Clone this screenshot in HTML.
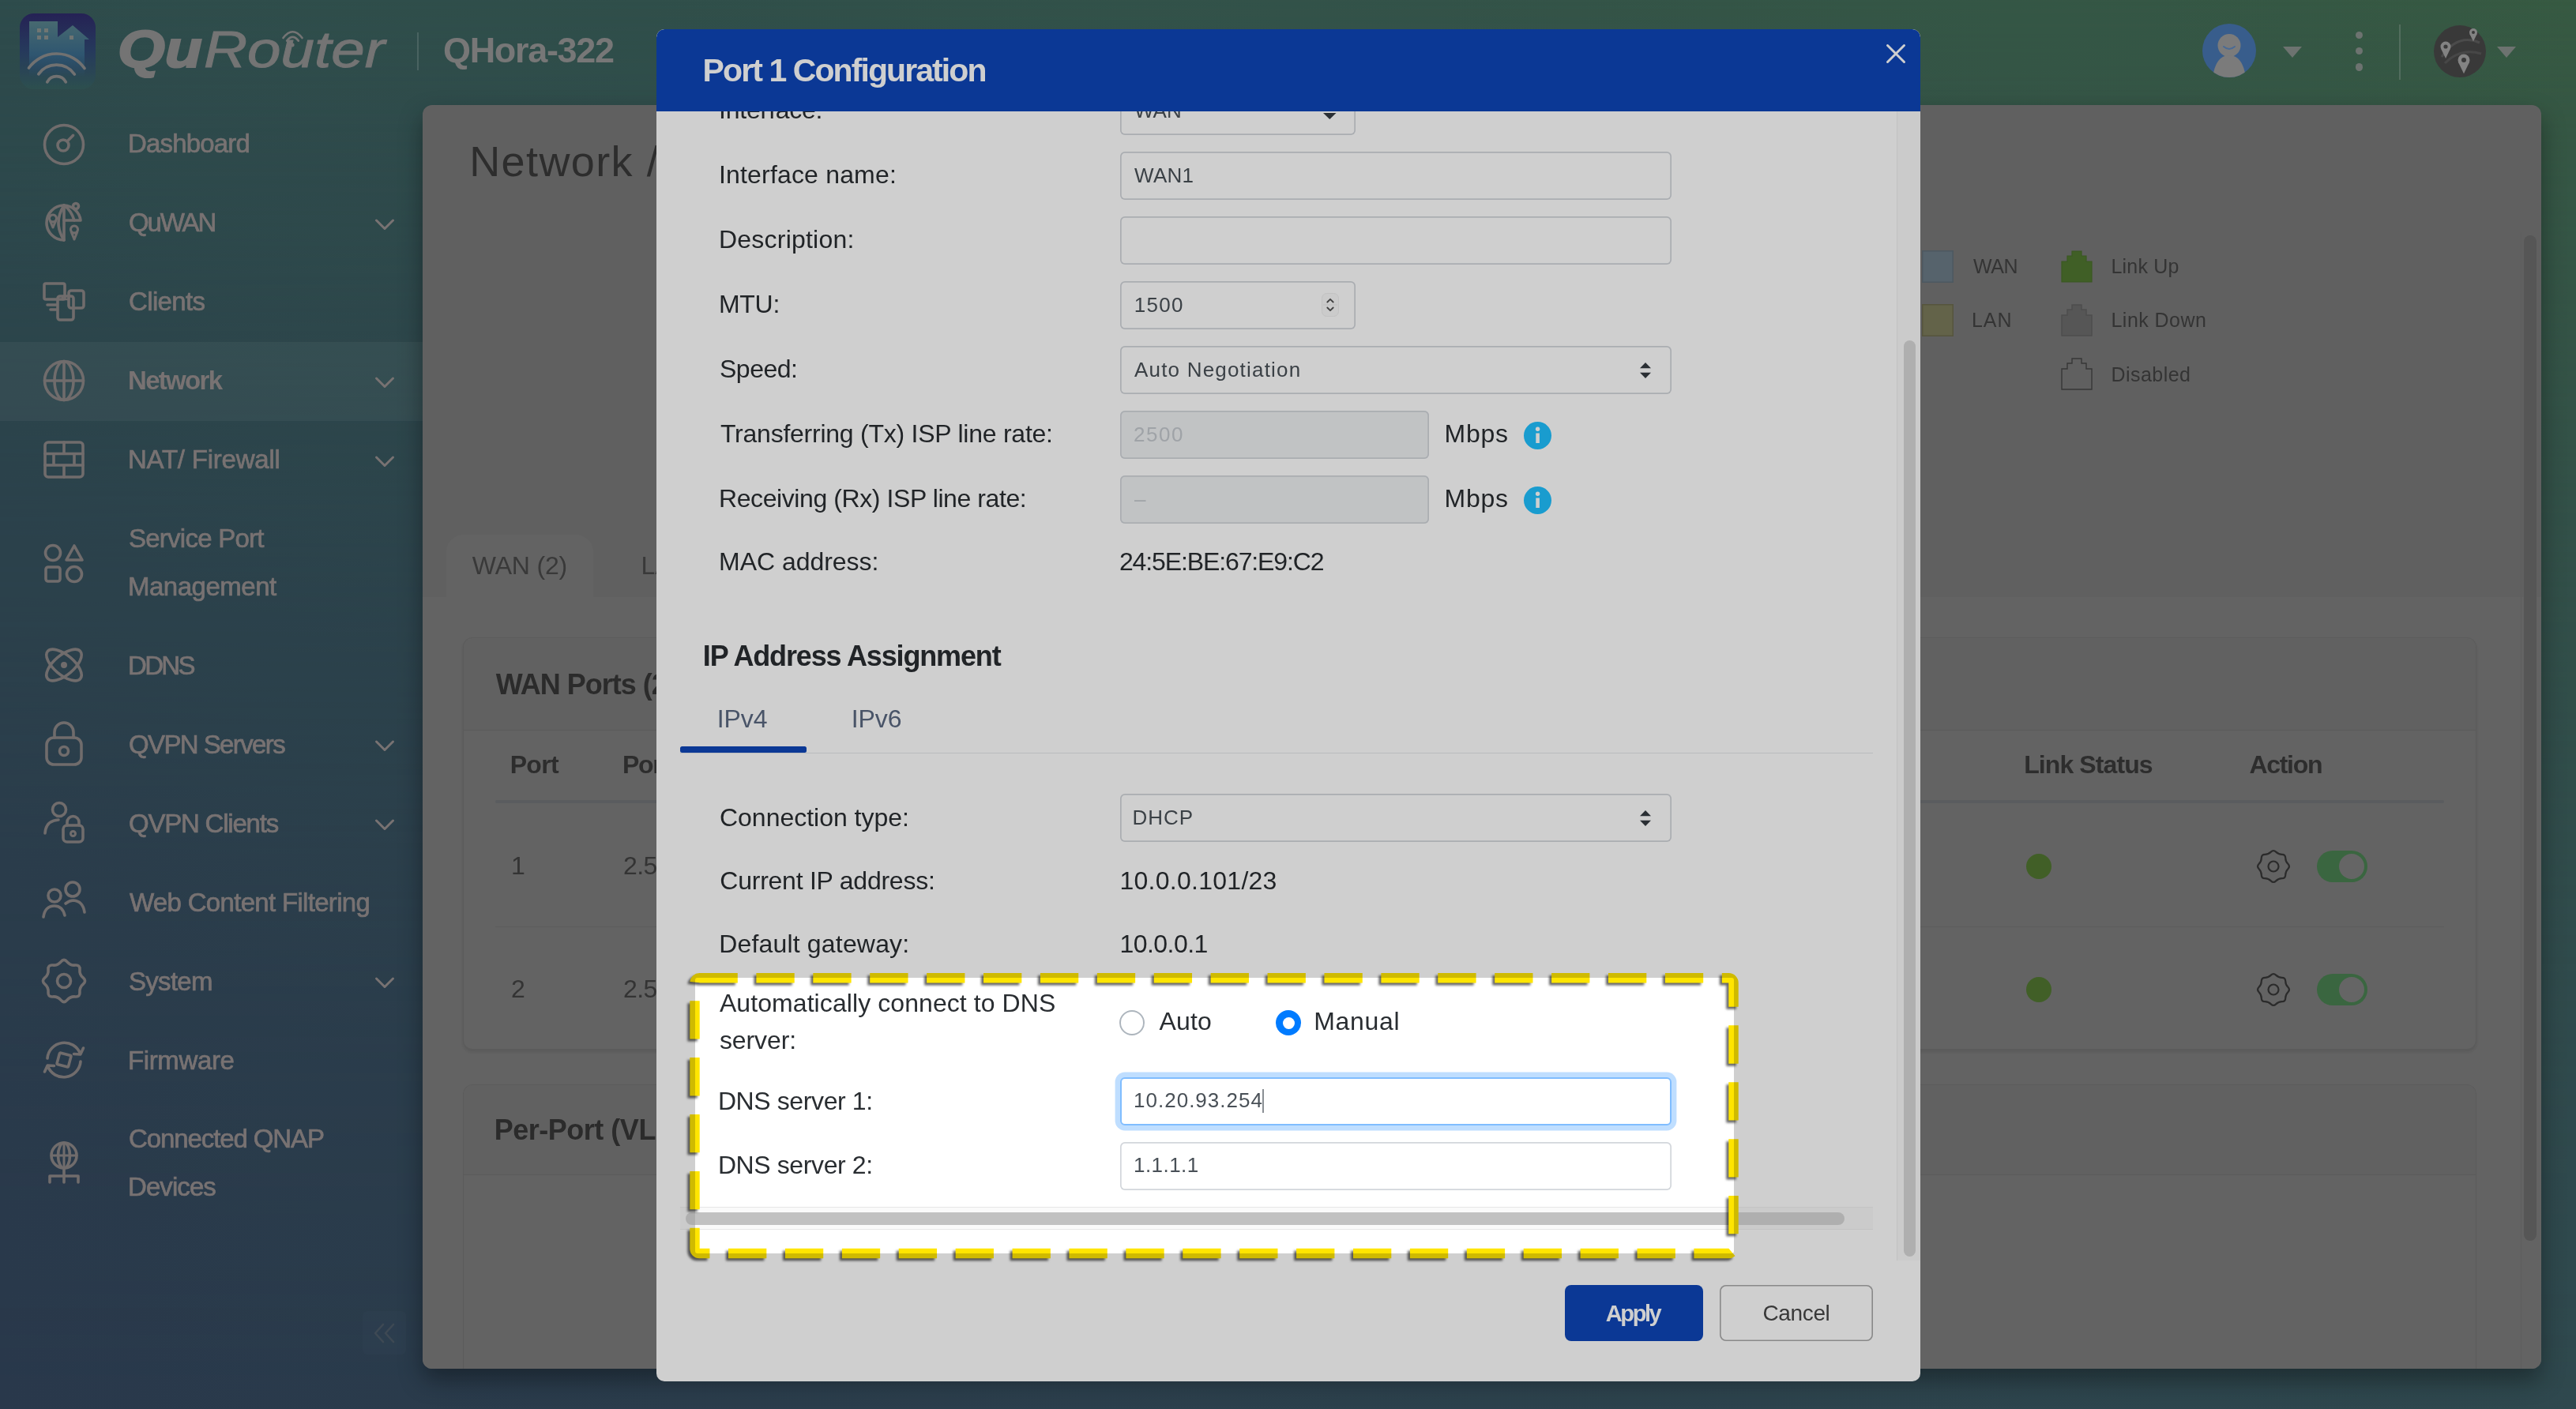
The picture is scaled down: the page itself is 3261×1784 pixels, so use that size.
<!DOCTYPE html>
<html lang="en"><head><meta charset="utf-8"><title>Port 1 Configuration</title><style>
html,body{margin:0;padding:0}
body{width:3261px;height:1784px;position:relative;overflow:hidden;background:#33465d;font-family:'Liberation Sans',sans-serif}
.t{position:absolute;white-space:pre;line-height:1;font-family:'Liberation Sans',sans-serif}
#bg{position:absolute;left:0;top:0;width:3261px;height:1784px;background:linear-gradient(to right,#395e5e 0%,#3f665b 50%,#446f52 100%)}
#bg2{position:absolute;left:0;top:0;width:3261px;height:1784px;background:linear-gradient(to right,#33465d,#3a5960);-webkit-mask-image:linear-gradient(to bottom,rgba(0,0,0,0) 0%,rgba(0,0,0,.17) 11%,rgba(0,0,0,.37) 25%,rgba(0,0,0,.55) 39%,rgba(0,0,0,.67) 50%,rgba(0,0,0,.79) 62%,rgba(0,0,0,.91) 78%,rgba(0,0,0,1) 100%);mask-image:linear-gradient(to bottom,rgba(0,0,0,0) 0%,rgba(0,0,0,.17) 11%,rgba(0,0,0,.37) 25%,rgba(0,0,0,.55) 39%,rgba(0,0,0,.67) 50%,rgba(0,0,0,.79) 62%,rgba(0,0,0,.91) 78%,rgba(0,0,0,1) 100%)}
#panel{position:absolute;left:535px;top:133px;width:2682px;height:1600px;border-radius:12px;background:#777777;overflow:hidden;box-shadow:0 14px 30px rgba(0,0,0,.36)}
#modal{position:absolute;left:830.5px;top:37px;width:1600.5px;height:1712px;border-radius:10px;background:#fff;overflow:hidden}
svg{overflow:visible}
#root{position:absolute;left:0;top:0;width:3261px;height:1784px;will-change:transform}
</style></head><body><div id="root"><div id="bg"></div><div id="bg2"></div><svg style="position:absolute;left:25.00px;top:17.00px;" width="96" height="96" viewBox="0 0 96 96">
<defs>
<linearGradient id="lg1" x1="0" y1="0" x2="0" y2="1"><stop offset="0" stop-color="#2e2a69"/><stop offset="0.5" stop-color="#2f4872"/><stop offset="1" stop-color="#386261"/></linearGradient>
<linearGradient id="lg2" x1="0" y1="0" x2="0" y2="1"><stop offset="0" stop-color="#58828a"/><stop offset="0.6" stop-color="#3a6a8a"/><stop offset="1" stop-color="#38698a" stop-opacity="0"/></linearGradient>
</defs>
<rect x="0" y="0" width="96" height="96" rx="18" fill="url(#lg1)"/>
<path d="M12 10 H48 V30 L67 15 L88 33 H82 V80 H12 Z" fill="url(#lg2)"/>
<g fill="#9a9890" opacity=".8"><rect x="22" y="19" width="5" height="5"/><rect x="31" y="19" width="5" height="5"/><rect x="22" y="28" width="5" height="5"/><rect x="31" y="28" width="5" height="5"/><rect x="63" y="28" width="5" height="5"/></g>
<g fill="none" stroke="#8c8c8c" stroke-width="3.7" stroke-linecap="round">
<path d="M11.5 69 A43.2 43.2 0 0 1 82 69.5"/><path d="M23.8 76.8 A28 28 0 0 1 69.3 77"/><path d="M34.8 86.8 A13.2 13.2 0 0 1 58.3 86.8"/></g>
</svg><span class="t" style="left:149.00px;top:29.33px;font-size:66px;color:#8f8f8f;font-style:italic"><span style="display:inline-block;line-height:1;font-weight:700;transform:scaleX(1.1660);transform-origin:0 0;-webkit-text-stroke:2.2px #8f8f8f">Qu</span><span style="display:inline-block;line-height:1;position:relative;left:17.00px;font-size:65px;transform:scaleX(1.1742);transform-origin:0 0;-webkit-text-stroke:1px #8f8f8f">Router</span></span><svg style="position:absolute;left:357.00px;top:37.00px;" width="27" height="23" viewBox="0 0 27 23"><g fill="none" stroke="#8f8f8f" stroke-width="2.7" stroke-linecap="round"><path d="M1.5 11 Q13.5 -4.5 25.5 11"/><path d="M6.2 14.6 Q13.5 5 20.8 14.6"/></g><circle cx="13.3" cy="20" r="2.4" fill="#8f8f8f"/></svg><div style="position:absolute;left:528.30px;top:41.00px;width:1.60px;height:48.00px;background:rgba(255,255,255,.17)"></div><span class="t" style="left:561.00px;top:40.81px;font-size:45px;color:#939393;letter-spacing:-1.321px;font-weight:700;">QHora-322</span><svg style="position:absolute;left:2788.00px;top:30.00px;" width="68" height="68" viewBox="0 0 68 68">
<defs><clipPath id="avc"><circle cx="34" cy="34" r="34"/></clipPath></defs>
<circle cx="34" cy="34" r="34" fill="#4573ad"/>
<g clip-path="url(#avc)" fill="#989898"><circle cx="34" cy="27.5" r="14.5"/><path d="M13 68 Q17 40 34 40 Q51 40 55 68 Z"/></g>
<path d="M27 29 Q34 35 41 29" fill="none" stroke="#5b83b8" stroke-width="2" stroke-linecap="round"/>
</svg><svg style="position:absolute;left:2889.50px;top:58.50px;" width="24" height="14" viewBox="0 0 24 14"><path d="M0 0 H24 L12 14 Z" fill="#878e8a"/></svg><div style="position:absolute;left:2982.10px;top:40.10px;width:9.20px;height:9.20px;border-radius:50%;background:#878e8a"></div><div style="position:absolute;left:2982.10px;top:60.20px;width:9.20px;height:9.20px;border-radius:50%;background:#878e8a"></div><div style="position:absolute;left:2982.10px;top:80.40px;width:9.20px;height:9.20px;border-radius:50%;background:#878e8a"></div><div style="position:absolute;left:3037.00px;top:30.50px;width:1.60px;height:70.50px;background:rgba(255,255,255,.19)"></div><svg style="position:absolute;left:3080.50px;top:32.00px;" width="66" height="66" viewBox="0 0 66 66">
<circle cx="33" cy="33" r="33" fill="#474747"/>
<path d="M10 40 Q30 10 58 22" fill="none" stroke="#5d5d5d" stroke-width="3"/>
<path d="M14 48 Q34 28 60 36" fill="none" stroke="#585858" stroke-width="3"/>
<g fill="#a2a2a2"><circle cx="15" cy="27" r="6.5"/><path d="M9.02 29.60 L15.00 41.95 L20.98 29.60 Z"/><circle cx="38" cy="44" r="7.5"/><path d="M31.10 47.00 L38.00 61.25 L44.90 47.00 Z"/><circle cx="50" cy="9" r="5"/><path d="M45.40 11.00 L50.00 20.50 L54.60 11.00 Z"/></g>
<g fill="#474747"><circle cx="15" cy="27" r="2.6"/><circle cx="38" cy="44" r="3"/><circle cx="50" cy="9" r="2"/></g>
</svg><svg style="position:absolute;left:3161.30px;top:58.50px;" width="24" height="14" viewBox="0 0 24 14"><path d="M0 0 H24 L12 14 Z" fill="#878e8a"/></svg><div style="position:absolute;left:0.00px;top:432.50px;width:535.00px;height:100.00px;background:rgba(255,255,255,.055)"></div><span class="t" style="left:162.00px;top:165.37px;font-size:33px;color:#948d8d;letter-spacing:-0.823px;-webkit-text-stroke:0.7px #948d8d;">Dashboard</span><svg style="position:absolute;left:54.00px;top:155.50px;" width="54" height="54" viewBox="0 0 54 54"><g fill="none" stroke="#8b8585" stroke-width="3.6" stroke-linecap="round" stroke-linejoin="round"><circle cx="27" cy="27" r="24.5"/><circle cx="26" cy="28" r="7"/><path d="M31 23 L38.5 15.5"/></g></svg><span class="t" style="left:163.00px;top:265.37px;font-size:33px;color:#948d8d;letter-spacing:-2.114px;-webkit-text-stroke:0.7px #948d8d;">QuWAN</span><svg style="position:absolute;left:474.00px;top:276.00px;" width="26" height="18" viewBox="0 0 26 18"><path d="M2.5 3 L13 13.5 L23.5 3" fill="none" stroke="#948d8d" stroke-width="3" stroke-linecap="round" stroke-linejoin="round"/></svg><svg style="position:absolute;left:54.00px;top:255.00px;" width="54" height="54" viewBox="0 0 54 54"><g fill="none" stroke="#8b8585" stroke-width="3.6" stroke-linecap="round" stroke-linejoin="round"><path d="M27 5 A22 22 0 1 0 27 49 Z"/><path d="M27 5 Q13 27 27 49"/><path d="M27 5 Q36 11 40 24"/><path d="M27 5 A22 22 0 0 1 48 24 H27"/><circle cx="42" cy="6" r="3.5"/><path d="M13 26 a4.5 4.5 0 1 1 0.01 0 M13 33 L9.5 25 M13 33 L16.5 25" stroke-width="3"/><path d="M40 40 a4.5 4.5 0 1 1 0.01 0 M40 48 L36.3 39 M40 48 L43.7 39" stroke-width="3"/></g></svg><span class="t" style="left:163.00px;top:365.37px;font-size:33px;color:#948d8d;letter-spacing:-0.628px;-webkit-text-stroke:0.7px #948d8d;">Clients</span><svg style="position:absolute;left:54.00px;top:354.00px;" width="54" height="54" viewBox="0 0 54 54"><g fill="none" stroke="#8b8585" stroke-width="3.6" stroke-linecap="round" stroke-linejoin="round"><rect x="2" y="5" width="26" height="20" rx="2"/><path d="M6 32 H17 M10 38 H17"/><rect x="33" y="14" width="19" height="22" rx="3"/><rect x="19" y="21" width="20" height="30" rx="3" fill="none"/><path d="M25 21 V25 H33 V21" stroke-width="2.5"/></g></svg><span class="t" style="left:162.00px;top:465.37px;font-size:33px;color:#948d8d;letter-spacing:-1.690px;font-weight:700;">Network</span><svg style="position:absolute;left:474.00px;top:476.00px;" width="26" height="18" viewBox="0 0 26 18"><path d="M2.5 3 L13 13.5 L23.5 3" fill="none" stroke="#948d8d" stroke-width="3" stroke-linecap="round" stroke-linejoin="round"/></svg><svg style="position:absolute;left:54.00px;top:455.00px;" width="54" height="54" viewBox="0 0 54 54"><g fill="none" stroke="#8b8585" stroke-width="3.6" stroke-linecap="round" stroke-linejoin="round"><circle cx="27" cy="27" r="24.5"/><ellipse cx="27" cy="27" rx="12" ry="24.5"/><path d="M2.5 27 H51.5 M27 2.5 V51.5"/></g></svg><span class="t" style="left:162.00px;top:565.37px;font-size:33px;color:#948d8d;letter-spacing:-0.228px;-webkit-text-stroke:0.7px #948d8d;">NAT/ Firewall</span><svg style="position:absolute;left:474.00px;top:576.00px;" width="26" height="18" viewBox="0 0 26 18"><path d="M2.5 3 L13 13.5 L23.5 3" fill="none" stroke="#948d8d" stroke-width="3" stroke-linecap="round" stroke-linejoin="round"/></svg><svg style="position:absolute;left:54.00px;top:555.00px;" width="54" height="54" viewBox="0 0 54 54"><g fill="none" stroke="#8b8585" stroke-width="3.6" stroke-linecap="round" stroke-linejoin="round"><rect x="3" y="5" width="48" height="44" rx="4"/><path d="M3 19.5 H51 M3 34 H51 M27 5 V19.5 M14 19.5 V34 M40 19.5 V34 M27 34 V49"/></g></svg><span class="t" style="left:163.00px;top:664.87px;font-size:33px;color:#948d8d;letter-spacing:-0.751px;-webkit-text-stroke:0.7px #948d8d;">Service Port</span><span class="t" style="left:162.00px;top:725.87px;font-size:33px;color:#948d8d;letter-spacing:-0.494px;-webkit-text-stroke:0.7px #948d8d;">Management</span><svg style="position:absolute;left:54.00px;top:686.00px;" width="54" height="54" viewBox="0 0 54 54"><g fill="none" stroke="#8b8585" stroke-width="3.6" stroke-linecap="round" stroke-linejoin="round"><circle cx="13" cy="14" r="9.5"/><path d="M40 5 L50 23 H30 Z"/><rect x="4" y="32" width="18" height="18" rx="3"/><circle cx="40" cy="41" r="9.5"/></g></svg><span class="t" style="left:162.00px;top:825.87px;font-size:33px;color:#948d8d;letter-spacing:-2.698px;-webkit-text-stroke:0.7px #948d8d;">DDNS</span><svg style="position:absolute;left:54.00px;top:815.00px;" width="54" height="54" viewBox="0 0 54 54"><g fill="none" stroke="#8b8585" stroke-width="3.6" stroke-linecap="round" stroke-linejoin="round"><ellipse cx="27" cy="27" rx="27" ry="12.5" transform="rotate(40 27 27)"/><ellipse cx="27" cy="27" rx="27" ry="12.5" transform="rotate(-40 27 27)"/><circle cx="27" cy="27" r="3" fill="#8b8585" stroke-width="2"/></g></svg><span class="t" style="left:163.00px;top:925.87px;font-size:33px;color:#948d8d;letter-spacing:-1.608px;-webkit-text-stroke:0.7px #948d8d;">QVPN Servers</span><svg style="position:absolute;left:474.00px;top:936.00px;" width="26" height="18" viewBox="0 0 26 18"><path d="M2.5 3 L13 13.5 L23.5 3" fill="none" stroke="#948d8d" stroke-width="3" stroke-linecap="round" stroke-linejoin="round"/></svg><svg style="position:absolute;left:54.00px;top:914.00px;" width="54" height="54" viewBox="0 0 54 54"><g fill="none" stroke="#8b8585" stroke-width="3.6" stroke-linecap="round" stroke-linejoin="round"><rect x="5" y="20" width="44" height="34" rx="9"/><path d="M15 20 V13 A12 12 0 0 1 39 13 V20"/><circle cx="27" cy="37" r="5.5"/></g></svg><span class="t" style="left:163.00px;top:1025.87px;font-size:33px;color:#948d8d;letter-spacing:-1.214px;-webkit-text-stroke:0.7px #948d8d;">QVPN Clients</span><svg style="position:absolute;left:474.00px;top:1036.00px;" width="26" height="18" viewBox="0 0 26 18"><path d="M2.5 3 L13 13.5 L23.5 3" fill="none" stroke="#948d8d" stroke-width="3" stroke-linecap="round" stroke-linejoin="round"/></svg><svg style="position:absolute;left:54.00px;top:1015.00px;" width="54" height="54" viewBox="0 0 54 54"><g fill="none" stroke="#8b8585" stroke-width="3.6" stroke-linecap="round" stroke-linejoin="round"><circle cx="21" cy="10" r="8.5"/><path d="M3 40 Q4 24 20 23"/><rect x="26" y="30" width="25" height="21" rx="5"/><path d="M31 30 V26 A7.5 7.5 0 0 1 46 26 V30"/><circle cx="38.5" cy="40.5" r="3" stroke-width="3"/></g></svg><span class="t" style="left:164.00px;top:1125.87px;font-size:33px;color:#948d8d;letter-spacing:-0.685px;-webkit-text-stroke:0.7px #948d8d;">Web Content Filtering</span><svg style="position:absolute;left:54.00px;top:1115.00px;" width="54" height="54" viewBox="0 0 54 54"><g fill="none" stroke="#8b8585" stroke-width="3.6" stroke-linecap="round" stroke-linejoin="round"><circle cx="15" cy="19" r="8"/><circle cx="38" cy="11" r="9"/><path d="M1 46 Q3 32 15 32 Q25 32 28 44"/><path d="M29 29 Q34 25 39 25 Q51 26 53 40"/></g></svg><span class="t" style="left:163.00px;top:1225.87px;font-size:33px;color:#948d8d;letter-spacing:-0.706px;-webkit-text-stroke:0.7px #948d8d;">System</span><svg style="position:absolute;left:474.00px;top:1236.00px;" width="26" height="18" viewBox="0 0 26 18"><path d="M2.5 3 L13 13.5 L23.5 3" fill="none" stroke="#948d8d" stroke-width="3" stroke-linecap="round" stroke-linejoin="round"/></svg><svg style="position:absolute;left:54.00px;top:1215.00px;" width="54" height="54" viewBox="0 0 54 54"><g fill="none" stroke="#8b8585" stroke-width="3.6" stroke-linecap="round" stroke-linejoin="round"><path d="M22.98 2.80 Q27.00 -2.00 31.02 2.80 Q35.04 7.60 41.27 7.05 Q47.51 6.49 46.95 12.73 Q46.40 18.96 51.20 22.98 Q56.00 27.00 51.20 31.02 Q46.40 35.04 46.95 41.27 Q47.51 47.51 41.27 46.95 Q35.04 46.40 31.02 51.20 Q27.00 56.00 22.98 51.20 Q18.96 46.40 12.73 46.95 Q6.49 47.51 7.05 41.27 Q7.60 35.04 2.80 31.02 Q-2.00 27.00 2.80 22.98 Q7.60 18.96 7.05 12.73 Q6.49 6.49 12.73 7.05 Q18.96 7.60 22.98 2.80Z"/><circle cx="27" cy="27" r="8.5"/></g></svg><span class="t" style="left:162.00px;top:1325.87px;font-size:33px;color:#948d8d;letter-spacing:-0.377px;-webkit-text-stroke:0.7px #948d8d;">Firmware</span><svg style="position:absolute;left:54.00px;top:1315.00px;" width="54" height="54" viewBox="0 0 54 54"><g fill="none" stroke="#8b8585" stroke-width="3.6" stroke-linecap="round" stroke-linejoin="round"><path d="M6 25 A21.5 21.5 0 0 1 47.5 19"/><path d="M39.5 19.5 L47.8 20 L51.5 12"/><path d="M48 29 A21.5 21.5 0 0 1 6.5 35"/><path d="M14.5 34.5 L6.2 34 L2.5 42"/><rect x="19.5" y="19.5" width="15" height="15" rx="1.5" transform="rotate(15 27 27)"/></g></svg><span class="t" style="left:163.00px;top:1425.37px;font-size:33px;color:#948d8d;letter-spacing:-1.100px;-webkit-text-stroke:0.7px #948d8d;">Connected QNAP</span><span class="t" style="left:162.00px;top:1486.37px;font-size:33px;color:#948d8d;letter-spacing:-0.928px;-webkit-text-stroke:0.7px #948d8d;">Devices</span><svg style="position:absolute;left:54.00px;top:1446.00px;" width="54" height="54" viewBox="0 0 54 54"><g fill="none" stroke="#8b8585" stroke-width="3.6" stroke-linecap="round" stroke-linejoin="round"><circle cx="27" cy="17" r="16"/><ellipse cx="27" cy="17" rx="7.5" ry="16"/><path d="M11 17 H43 M27 1 V33" stroke-width="3"/><path d="M27 33 V51 M9 51 V43 H45 V51"/></g></svg><div style="position:absolute;left:459.00px;top:1660.00px;width:55.00px;height:55.00px;border-radius:6px;background:rgba(255,255,255,.02)"></div><svg style="position:absolute;left:471.00px;top:1672.00px;" width="32" height="32" viewBox="0 0 32 32"><path d="M14 5 L4 16 L14 27 M27 5 L17 16 L27 27" fill="none" stroke="#4d5b68" stroke-width="2.6" stroke-linecap="round" stroke-linejoin="round"/></svg><div id="panel"><div style="position:absolute;left:-535px;top:-133px;width:3261px;height:1784px"><div style="position:absolute;left:535.00px;top:756.00px;width:2682.00px;height:1000.00px;background:#7b7b7b"></div><div style="position:absolute;left:564.50px;top:677.00px;width:186.00px;height:80.00px;background:#7b7b7b;border-radius:22px 22px 0 0"></div><span class="t" style="left:594.20px;top:177.09px;font-size:54px;color:#383838;letter-spacing:1.393px;">Network</span><span class="t" style="left:818.80px;top:177.09px;font-size:54px;color:#383838;">/</span><span class="t" style="left:597.80px;top:700.41px;font-size:32px;color:#474747;letter-spacing:-0.185px;">WAN (2)</span><span class="t" style="left:811.40px;top:700.41px;font-size:32px;color:#474747;">LAN</span><div style="position:absolute;left:2433.00px;top:317.00px;width:40.00px;height:41.00px;background:#6b7a85;box-shadow:inset 0 0 0 1.5px #5f6d77"></div><div style="position:absolute;left:2433.00px;top:385.00px;width:40.00px;height:41.00px;background:#7b7a5a;box-shadow:inset 0 0 0 1.5px #6a694c"></div><span class="t" style="left:2498.00px;top:325.04px;font-size:25px;color:#404040;letter-spacing:-0.422px;">WAN</span><span class="t" style="left:2496.00px;top:393.24px;font-size:25px;color:#404040;letter-spacing:0.961px;">LAN</span><span class="t" style="left:2672.50px;top:325.04px;font-size:25px;color:#404040;letter-spacing:0.190px;">Link Up</span><span class="t" style="left:2672.50px;top:393.24px;font-size:25px;color:#404040;letter-spacing:0.460px;">Link Down</span><span class="t" style="left:2672.50px;top:461.64px;font-size:25px;color:#404040;letter-spacing:0.447px;">Disabled</span><svg style="position:absolute;left:2609.00px;top:317.00px;" width="40" height="41" viewBox="0 0 40 41"><path d="M1 40 V14 H8 V7 H14 V1 H26 V7 H32 V14 H39 V40 Z" fill="#4f762f" stroke="#496d2b" stroke-width="1.2"/></svg><svg style="position:absolute;left:2609.00px;top:385.00px;" width="40" height="41" viewBox="0 0 40 41"><path d="M1 40 V14 H8 V7 H14 V1 H26 V7 H32 V14 H39 V40 Z" fill="#6a6a6a" stroke="#606060" stroke-width="1.5"/></svg><svg style="position:absolute;left:2609.00px;top:453.00px;" width="40" height="41" viewBox="0 0 40 41"><path d="M1 40 V14 H8 V7 H14 V1 H26 V7 H32 V14 H39 V40 Z" fill="none" stroke="#444444" stroke-width="1.4"/></svg><div style="position:absolute;left:3190.50px;top:294.00px;width:1.00px;height:1440.00px;background:#747474"></div><div style="position:absolute;left:3195.40px;top:298.00px;width:15.60px;height:1272.70px;background:#6a6a6a;border-radius:8px"></div><div style="position:absolute;left:585.80px;top:807.30px;width:2549.20px;height:521.90px;background:#7a7a7a;border:1.5px solid #717171;border-radius:12px;box-sizing:border-box;box-shadow:0 3px 5px rgba(0,0,0,.10)"></div><div style="position:absolute;left:587.00px;top:808.80px;width:2547.00px;height:115.70px;background:#787878;border-radius:11px 11px 0 0;border-bottom:1.5px solid #717171"></div><span class="t" style="left:627.70px;top:849.23px;font-size:36px;color:#353535;letter-spacing:-0.996px;font-weight:700;">WAN Ports (2)</span><span class="t" style="left:645.70px;top:951.61px;font-size:32px;color:#383838;letter-spacing:-0.681px;font-weight:700;">Port</span><span class="t" style="left:788.00px;top:951.61px;font-size:32px;color:#383838;letter-spacing:-1.286px;font-weight:700;">Port Speed</span><span class="t" style="left:2562.20px;top:951.61px;font-size:32px;color:#383838;letter-spacing:-0.907px;font-weight:700;">Link Status</span><span class="t" style="left:2847.40px;top:951.61px;font-size:32px;color:#383838;letter-spacing:-1.280px;font-weight:700;">Action</span><div style="position:absolute;left:626.80px;top:1013.20px;width:2467.70px;height:4.20px;background:#6f7275;border-radius:2px"></div><span class="t" style="left:647.00px;top:1079.51px;font-size:32px;color:#404040;">1</span><span class="t" style="left:789.00px;top:1079.51px;font-size:32px;color:#404040;letter-spacing:-0.548px;">2.5 Gbps</span><div style="position:absolute;left:626.80px;top:1172.60px;width:2467.70px;height:1.50px;background:#727272"></div><span class="t" style="left:647.00px;top:1235.91px;font-size:32px;color:#404040;">2</span><span class="t" style="left:789.00px;top:1235.91px;font-size:32px;color:#404040;letter-spacing:-0.548px;">2.5 Gbps</span><div style="position:absolute;left:2564.80px;top:1080.60px;width:32.00px;height:32.00px;border-radius:50%;background:#507631"></div><svg style="position:absolute;left:2857.00px;top:1075.60px;" width="42" height="42" viewBox="0 0 42 42"><path d="M17.84 2.63 Q21.00 -0.50 24.16 2.63 Q27.31 5.76 31.76 5.78 Q36.20 5.80 36.22 10.24 Q36.24 14.69 39.37 17.84 Q42.50 21.00 39.37 24.16 Q36.24 27.31 36.22 31.76 Q36.20 36.20 31.76 36.22 Q27.31 36.24 24.16 39.37 Q21.00 42.50 17.84 39.37 Q14.69 36.24 10.24 36.22 Q5.80 36.20 5.78 31.76 Q5.76 27.31 2.63 24.16 Q-0.50 21.00 2.63 17.84 Q5.76 14.69 5.78 10.24 Q5.80 5.80 10.24 5.78 Q14.69 5.76 17.84 2.63Z" fill="none" stroke="#363636" stroke-width="2.2"/><circle cx="21" cy="21" r="6.5" fill="none" stroke="#363636" stroke-width="2.2"/></svg><div style="position:absolute;left:2932.60px;top:1076.60px;width:64.00px;height:40.00px;border-radius:20px;background:#487e4f"><div style="position:absolute;left:28.00px;top:4.00px;width:32.00px;height:32.00px;border-radius:50%;background:#7d7d7d"></div></div><div style="position:absolute;left:2564.80px;top:1236.60px;width:32.00px;height:32.00px;border-radius:50%;background:#507631"></div><svg style="position:absolute;left:2857.00px;top:1231.60px;" width="42" height="42" viewBox="0 0 42 42"><path d="M17.84 2.63 Q21.00 -0.50 24.16 2.63 Q27.31 5.76 31.76 5.78 Q36.20 5.80 36.22 10.24 Q36.24 14.69 39.37 17.84 Q42.50 21.00 39.37 24.16 Q36.24 27.31 36.22 31.76 Q36.20 36.20 31.76 36.22 Q27.31 36.24 24.16 39.37 Q21.00 42.50 17.84 39.37 Q14.69 36.24 10.24 36.22 Q5.80 36.20 5.78 31.76 Q5.76 27.31 2.63 24.16 Q-0.50 21.00 2.63 17.84 Q5.76 14.69 5.78 10.24 Q5.80 5.80 10.24 5.78 Q14.69 5.76 17.84 2.63Z" fill="none" stroke="#363636" stroke-width="2.2"/><circle cx="21" cy="21" r="6.5" fill="none" stroke="#363636" stroke-width="2.2"/></svg><div style="position:absolute;left:2932.60px;top:1232.60px;width:64.00px;height:40.00px;border-radius:20px;background:#487e4f"><div style="position:absolute;left:28.00px;top:4.00px;width:32.00px;height:32.00px;border-radius:50%;background:#7d7d7d"></div></div><div style="position:absolute;left:585.80px;top:1372.70px;width:2549.20px;height:500.00px;background:#7a7a7a;border:1.5px solid #717171;border-radius:12px;box-sizing:border-box"></div><div style="position:absolute;left:587.00px;top:1374.00px;width:2547.00px;height:113.40px;background:#787878;border-radius:11px 11px 0 0;border-bottom:1.5px solid #717171"></div><span class="t" style="left:625.70px;top:1412.93px;font-size:36px;color:#353535;letter-spacing:-0.484px;font-weight:700;">Per-Port (VLAN)</span></div></div><div id="modal"><div style="position:absolute;left:-830.5px;top:-37px;width:3261px;height:1784px"><span class="t" style="left:910.00px;top:123.41px;font-size:32px;color:#292d31;letter-spacing:-0.214px;">Interface:</span><div style="position:absolute;left:1417.50px;top:109.50px;width:298.50px;height:61.00px;border-radius:6px;background:#fff;box-shadow:inset 0 0 0 1.7px #d2d6db;"></div><span class="t" style="left:1436.00px;top:126.59px;font-size:26px;color:#495057;">WAN</span><svg style="position:absolute;left:1674.50px;top:134.50px;" width="16.5" height="16" viewBox="0 0 16.5 16"><path d="M0 8 H16.5 L8.25 16 Z" fill="#343a40"/></svg><span class="t" style="left:910.00px;top:205.41px;font-size:32px;color:#292d31;letter-spacing:0.175px;">Interface name:</span><div style="position:absolute;left:1417.50px;top:191.50px;width:698.50px;height:61.00px;border-radius:6px;background:#fff;box-shadow:inset 0 0 0 1.7px #d2d6db;"></div><span class="t" style="left:1436.00px;top:208.59px;font-size:26px;color:#495057;letter-spacing:0.302px;">WAN1</span><span class="t" style="left:910.00px;top:287.41px;font-size:32px;color:#292d31;letter-spacing:0.213px;">Description:</span><div style="position:absolute;left:1417.50px;top:273.50px;width:698.50px;height:61.00px;border-radius:6px;background:#fff;box-shadow:inset 0 0 0 1.7px #d2d6db;"></div><span class="t" style="left:910.00px;top:369.41px;font-size:32px;color:#292d31;letter-spacing:-0.304px;">MTU:</span><div style="position:absolute;left:1417.50px;top:355.50px;width:298.50px;height:61.00px;border-radius:6px;background:#fff;box-shadow:inset 0 0 0 1.7px #d2d6db;"></div><span class="t" style="left:1435.80px;top:372.59px;font-size:26px;color:#495057;letter-spacing:1.273px;">1500</span><svg style="position:absolute;left:1673.00px;top:370.50px;" width="22" height="30" viewBox="0 0 22 30"><rect x="0.5" y="0.5" width="21" height="29" rx="6" fill="#fafafa" stroke="#efefef"/><path d="M7.3 11.5 L11 7.8 L14.7 11.5 M7.3 18.5 L11 22.2 L14.7 18.5" fill="none" stroke="#505050" stroke-width="1.8" stroke-linecap="round" stroke-linejoin="round"/><path d="M2 15 H20" stroke="#ececec" stroke-width="1"/></svg><span class="t" style="left:911.00px;top:451.41px;font-size:32px;color:#292d31;letter-spacing:-0.506px;">Speed:</span><div style="position:absolute;left:1417.50px;top:437.50px;width:698.50px;height:61.00px;border-radius:6px;background:#fff;box-shadow:inset 0 0 0 1.7px #d2d6db;"></div><span class="t" style="left:1436.00px;top:454.59px;font-size:26px;color:#495057;letter-spacing:1.194px;">Auto Negotiation</span><svg style="position:absolute;left:2074.70px;top:457.50px;" width="16" height="22" viewBox="0 0 16 22"><path d="M1 8.3 L8 1 L15 8.3 Z M1 13.7 L8 21 L15 13.7 Z" fill="#343a40"/></svg><span class="t" style="left:912.00px;top:533.41px;font-size:32px;color:#292d31;letter-spacing:-0.244px;">Transferring (Tx) ISP line rate:</span><div style="position:absolute;left:1417.50px;top:519.50px;width:391.50px;height:61.00px;border-radius:6px;background:#fff;box-shadow:inset 0 0 0 1.7px #d2d6db;background:#eef0f2"></div><span class="t" style="left:1435.00px;top:536.59px;font-size:26px;color:#c4c9ce;letter-spacing:1.507px;">2500</span><span class="t" style="left:1828.60px;top:533.31px;font-size:32px;color:#292d31;letter-spacing:0.717px;">Mbps</span><span class="t" style="left:910.00px;top:615.41px;font-size:32px;color:#292d31;letter-spacing:-0.415px;">Receiving (Rx) ISP line rate:</span><div style="position:absolute;left:1417.50px;top:601.50px;width:391.50px;height:61.00px;border-radius:6px;background:#fff;box-shadow:inset 0 0 0 1.7px #d2d6db;background:#eef0f2"></div><span class="t" style="left:1436.00px;top:618.59px;font-size:26px;color:#c4c9ce;">–</span><span class="t" style="left:1828.60px;top:615.31px;font-size:32px;color:#292d31;letter-spacing:0.717px;">Mbps</span><svg style="position:absolute;left:1929.10px;top:533.50px;" width="35" height="35" viewBox="0 0 35 35"><circle cx="17.5" cy="17.5" r="17.5" fill="#1fc1ff"/><rect x="15.3" y="14.5" width="4.6" height="12.5" fill="#fff"/><circle cx="17.6" cy="9.3" r="2.7" fill="#fff"/></svg><svg style="position:absolute;left:1929.10px;top:615.70px;" width="35" height="35" viewBox="0 0 35 35"><circle cx="17.5" cy="17.5" r="17.5" fill="#1fc1ff"/><rect x="15.3" y="14.5" width="4.6" height="12.5" fill="#fff"/><circle cx="17.6" cy="9.3" r="2.7" fill="#fff"/></svg><span class="t" style="left:910.00px;top:695.31px;font-size:32px;color:#292d31;letter-spacing:-0.031px;">MAC address:</span><span class="t" style="left:1416.90px;top:695.31px;font-size:32px;color:#292d31;letter-spacing:-1.114px;">24:5E:BE:67:E9:C2</span><span class="t" style="left:889.80px;top:812.93px;font-size:36px;color:#292d31;letter-spacing:-1.146px;font-weight:700;">IP Address Assignment</span><span class="t" style="left:907.70px;top:893.91px;font-size:32px;color:#5a6880;letter-spacing:-0.045px;">IPv4</span><span class="t" style="left:1077.70px;top:893.91px;font-size:32px;color:#5a6880;letter-spacing:-0.078px;">IPv6</span><div style="position:absolute;left:861.00px;top:952.60px;width:1509.50px;height:1.60px;background:#e6e8ea"></div><div style="position:absolute;left:861.00px;top:945.00px;width:160.00px;height:8.00px;background:#0e46b8;border-radius:2.5px"></div><span class="t" style="left:911.00px;top:1018.91px;font-size:32px;color:#292d31;letter-spacing:-0.018px;">Connection type:</span><div style="position:absolute;left:1417.50px;top:1005.00px;width:698.50px;height:61.00px;border-radius:6px;background:#fff;box-shadow:inset 0 0 0 1.7px #d2d6db;"></div><span class="t" style="left:1433.40px;top:1022.09px;font-size:26px;color:#495057;letter-spacing:1.024px;">DHCP</span><svg style="position:absolute;left:2074.70px;top:1025.00px;" width="16" height="22" viewBox="0 0 16 22"><path d="M1 8.3 L8 1 L15 8.3 Z M1 13.7 L8 21 L15 13.7 Z" fill="#343a40"/></svg><span class="t" style="left:911.30px;top:1099.31px;font-size:32px;color:#292d31;letter-spacing:-0.242px;">Current IP address:</span><span class="t" style="left:1417.50px;top:1099.31px;font-size:32px;color:#292d31;letter-spacing:0.264px;">10.0.0.101/23</span><span class="t" style="left:910.20px;top:1179.21px;font-size:32px;color:#292d31;letter-spacing:0.175px;">Default gateway:</span><span class="t" style="left:1417.50px;top:1179.21px;font-size:32px;color:#292d31;letter-spacing:-0.551px;">10.0.0.1</span><span class="t" style="left:910.90px;top:1253.71px;font-size:32px;color:#292d31;letter-spacing:0.080px;">Automatically connect to DNS</span><span class="t" style="left:910.90px;top:1300.91px;font-size:32px;color:#292d31;letter-spacing:-0.084px;">server:</span><div style="position:absolute;left:1417.00px;top:1279.00px;width:32.00px;height:32.00px;box-sizing:border-box;border:2px solid #adb5bd;border-radius:50%;background:#fff"></div><span class="t" style="left:1467.60px;top:1277.31px;font-size:32px;color:#292d31;letter-spacing:0.123px;">Auto</span><div style="position:absolute;left:1615.00px;top:1279.00px;width:32.00px;height:32.00px;border-radius:50%;background:#007bff"><div style="position:absolute;left:8.50px;top:8.50px;width:15.00px;height:15.00px;border-radius:50%;background:#fff"></div></div><span class="t" style="left:1663.30px;top:1277.31px;font-size:32px;color:#292d31;letter-spacing:0.651px;">Manual</span><span class="t" style="left:908.90px;top:1377.91px;font-size:32px;color:#292d31;letter-spacing:-0.396px;">DNS server 1:</span><div style="position:absolute;left:1417.50px;top:1363.50px;width:698.50px;height:61.00px;box-sizing:border-box;border:2px solid #80bdff;border-radius:6px;background:#fff;box-shadow:0 0 0 6.4px rgba(0,123,255,.25)"></div><span class="t" style="left:1435.00px;top:1380.49px;font-size:26px;color:#495057;letter-spacing:1.014px;">10.20.93.254</span><div style="position:absolute;left:1598.30px;top:1379.00px;width:1.60px;height:30.00px;background:#8a8f94"></div><span class="t" style="left:908.90px;top:1459.21px;font-size:32px;color:#292d31;letter-spacing:-0.396px;">DNS server 2:</span><div style="position:absolute;left:1417.50px;top:1445.50px;width:698.50px;height:61.00px;border-radius:6px;background:#fff;box-shadow:inset 0 0 0 1.7px #d2d6db;"></div><span class="t" style="left:1435.00px;top:1462.49px;font-size:26px;color:#495057;letter-spacing:0.458px;">1.1.1.1</span><div style="position:absolute;left:861.00px;top:1527.50px;width:1509.50px;height:29.00px;box-sizing:border-box;background:#fafafa;border-top:1.5px solid #f0f0f0;border-bottom:1.5px solid #f0f0f0"></div><div style="position:absolute;left:879.50px;top:1527.50px;width:1315.00px;height:29.00px;box-sizing:border-box;background:#fafafa;border-top:1.5px solid #e6e6e6;border-bottom:1.5px solid #e6e6e6"></div><div style="position:absolute;left:867.50px;top:1535.30px;width:1467.00px;height:15.50px;background:#d8d8d8;border-radius:8px"></div><div style="position:absolute;left:879.50px;top:1535.30px;width:1315.00px;height:15.50px;background:#c1c1c1"></div><div style="position:absolute;left:2401.00px;top:140.00px;width:30.00px;height:1456.00px;box-sizing:border-box;background:#fbfbfb;border-left:1.5px solid #efefef"></div><div style="position:absolute;left:2409.50px;top:431.00px;width:15.00px;height:1159.50px;background:#d8d8d8;border-radius:8px"></div><div style="position:absolute;left:830.50px;top:37.00px;width:1600.50px;height:103.50px;background:#0e46b8;border-radius:10px 10px 0 0"></div><span class="t" style="left:889.60px;top:68.59px;font-size:41px;color:#ffffff;letter-spacing:-1.919px;font-weight:700;">Port 1 Configuration</span><svg style="position:absolute;left:2387.50px;top:56.00px;" width="24" height="24" viewBox="0 0 24 24"><path d="M1.5 1.5 L22.5 22.5 M22.5 1.5 L1.5 22.5" stroke="#fff" stroke-width="3" stroke-linecap="round"/></svg><div style="position:absolute;left:1981.00px;top:1627.30px;width:175.40px;height:71.00px;background:#0e46b8;border-radius:8px"></div><span class="t" style="left:2032.80px;top:1648.75px;font-size:29px;color:#fff;letter-spacing:-2.407px;font-weight:700;">Apply</span><div style="position:absolute;left:2176.80px;top:1627.30px;width:194.50px;height:71.00px;box-shadow:inset 0 0 0 1.6px #a9a9a9;border-radius:8px"></div><span class="t" style="left:2231.50px;top:1649.20px;font-size:28px;color:#474747;letter-spacing:-0.368px;">Cancel</span></div></div><svg style="position:absolute;left:0.00px;top:0.00px;pointer-events:none" width="3261" height="1784" viewBox="0 0 3261 1784"><path d="M885.5 1238.3 H2188.5 A6 6 0 0 1 2194.5 1244.3 V1581 A6 6 0 0 1 2188.5 1587 H885.5 A6 6 0 0 1 879.5 1581 V1244.3 A6 6 0 0 1 885.5 1238.3" fill="none" stroke="#ffe500" stroke-width="12.4" stroke-dasharray="48.3 23.606" style="filter:drop-shadow(-3px 3px 1.5px rgba(0,0,0,.6))"/></svg><div style="position:absolute;left:879.50px;top:1238.30px;width:1315.00px;height:348.70px;box-shadow:0 0 0 4000px rgba(0,0,0,.19);border-radius:3px"></div></div></body></html>
